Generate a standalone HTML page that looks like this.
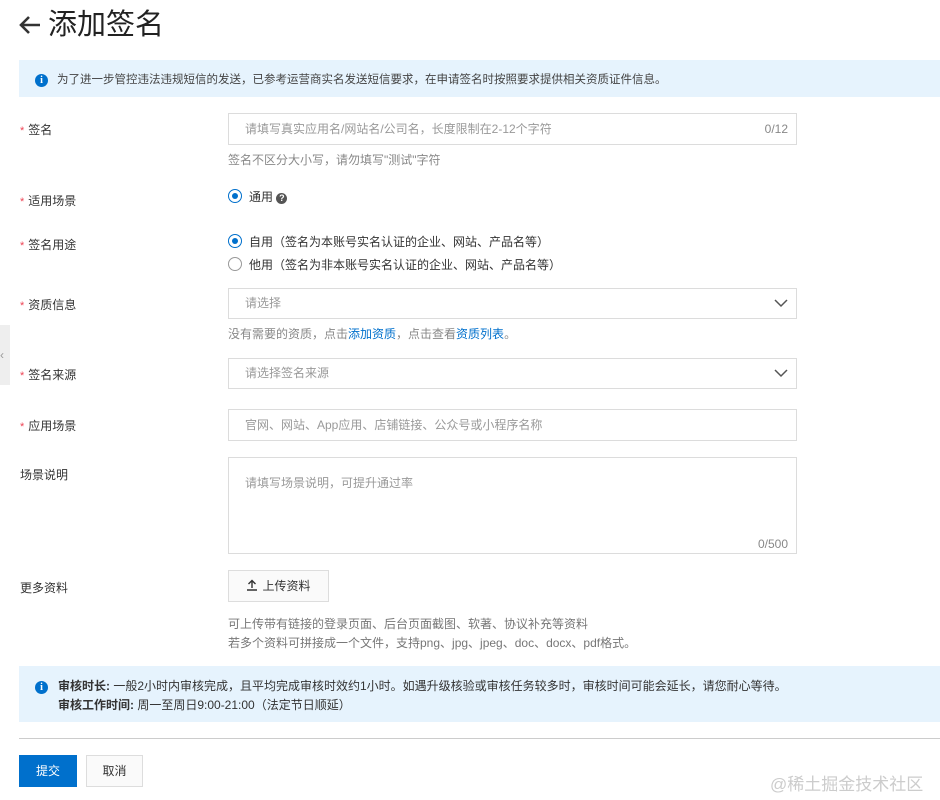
<!DOCTYPE html>
<html><head><meta charset="utf-8"><style>
*{box-sizing:border-box;margin:0;padding:0}
body{width:940px;height:800px;background:#fff;font-family:"Liberation Sans","Noto Sans CJK SC",sans-serif;font-size:12px;color:#333;position:relative;overflow:hidden}
.a{position:absolute}
.lbl{left:20px;font-size:12px;color:#333}
.lbl i{color:#e45;font-style:normal;margin-right:4px;font-size:11px}
.inp{left:228px;width:569px;border:1px solid #dcdcdc;background:#fff;color:#999;padding-left:16px;font-size:12px}
.hint{left:228px;color:#888;font-size:12px}
.radio{width:14px;height:14px;border-radius:50%;border:1px solid #999;display:inline-block;vertical-align:-2px;margin-right:7px;position:relative}
.radio.on{border-color:#0070cc;border-width:1.5px}
.radio.on:after{content:"";position:absolute;left:2.5px;top:2.5px;width:6px;height:6px;border-radius:50%;background:#0070cc}
.chev{position:absolute;right:8px;top:7px}
.info{left:19px;width:921px;background:#e6f3fd}
.ic{display:inline-block;width:13px;height:13px;border-radius:50%;background:#0070cc;color:#fff;font-size:10px;font-weight:bold;text-align:center;line-height:13px;font-family:"Liberation Serif",serif}
a{color:#0070cc;text-decoration:none}
</style></head><body>
<div class="a" style="left:18px;top:6px;font-size:29px;color:#222;line-height:38px">
<svg width="24" height="20" viewBox="0 0 24 20" style="vertical-align:-1px;margin-right:6px"><path d="M22 10H4M11 2L3 10l8 8" stroke="#333" stroke-width="2.6" fill="none"/></svg>添加签名</div>
<div class="a info" style="top:60px;height:37px;padding:11px 0 0 16px;color:#444;font-size:11.5px"><span class="ic" style="margin-right:9px">i</span>为了进一步管控违法违规短信的发送，已参考运营商实名发送短信要求，在申请签名时按照要求提供相关资质证件信息。</div>
<div class="a" style="left:0;top:325px;width:10px;height:60px;background:#eee;color:#999;font-size:12px;line-height:60px">‹</div>

<div class="a lbl" style="top:121px"><i>*</i>签名</div>
<div class="a inp" style="top:113px;height:32px;line-height:30px">请填写真实应用名/网站名/公司名，长度限制在2-12个字符<span style="position:absolute;right:8px;color:#888">0/12</span></div>
<div class="a hint" style="top:151px">签名不区分大小写，请勿填写"测试"字符</div>

<div class="a lbl" style="top:192px"><i>*</i>适用场景</div>
<div class="a" style="left:228px;top:188px;color:#333"><span class="radio on"></span>通用 <span style="display:inline-block;width:11px;height:11px;border-radius:50%;background:#555;color:#fff;font-size:9px;line-height:11px;text-align:center;font-weight:bold">?</span></div>

<div class="a lbl" style="top:236px"><i>*</i>签名用途</div>
<div class="a" style="left:228px;top:233px"><span class="radio on"></span>自用（签名为本账号实名认证的企业、网站、产品名等）</div>
<div class="a" style="left:228px;top:256px"><span class="radio"></span>他用（签名为非本账号实名认证的企业、网站、产品名等）</div>

<div class="a lbl" style="top:296px"><i>*</i>资质信息</div>
<div class="a inp" style="top:288px;height:31px;line-height:29px">请选择<svg class="chev" width="14" height="14"><path d="M1 4l6 6 6-6" stroke="#555" stroke-width="1.5" fill="none"/></svg></div>
<div class="a hint" style="top:325px">没有需要的资质，点击<a>添加资质</a>，点击查看<a>资质列表</a>。</div>

<div class="a lbl" style="top:366px"><i>*</i>签名来源</div>
<div class="a inp" style="top:358px;height:31px;line-height:29px">请选择签名来源<svg class="chev" width="14" height="14"><path d="M1 4l6 6 6-6" stroke="#555" stroke-width="1.5" fill="none"/></svg></div>

<div class="a lbl" style="top:417px"><i>*</i>应用场景</div>
<div class="a inp" style="top:409px;height:32px;line-height:30px">官网、网站、App应用、店铺链接、公众号或小程序名称</div>

<div class="a lbl" style="top:466px">场景说明</div>
<div class="a inp" style="top:457px;height:97px;padding-top:16px">请填写场景说明，可提升通过率<span style="position:absolute;right:8px;bottom:2px;color:#888">0/500</span></div>

<div class="a lbl" style="top:579px">更多资料</div>
<div class="a" style="left:228px;top:570px;width:101px;height:32px;border:1px solid #ddd;background:#fafafa;line-height:30px;text-align:center;color:#333">
<svg width="12" height="12" style="vertical-align:-1px;margin-right:4px"><path d="M6 9V1.5M2.5 5L6 1.5 9.5 5M1 11h10" stroke="#333" stroke-width="1.4" fill="none"/></svg>上传资料</div>
<div class="a hint" style="top:615px;line-height:19px;color:#777">可上传带有链接的登录页面、后台页面截图、软著、协议补充等资料<br>若多个资料可拼接成一个文件，支持png、jpg、jpeg、doc、docx、pdf格式。</div>

<div class="a info" style="top:666px;height:56px;padding:11px 0 0 16px;line-height:19px;color:#333"><span class="ic" style="margin-right:10px">i</span><b>审核时长:</b> 一般2小时内审核完成，且平均完成审核时效约1小时。如遇升级核验或审核任务较多时，审核时间可能会延长，请您耐心等待。<br><span style="margin-left:23px"><b>审核工作时间:</b> 周一至周日9:00-21:00（法定节日顺延）</span></div>
<div class="a" style="left:19px;top:738px;width:921px;height:1px;background:#ccc"></div>
<div class="a" style="left:19px;top:755px;width:58px;height:32px;background:#0070cc;color:#fff;text-align:center;line-height:32px">提交</div>
<div class="a" style="left:86px;top:755px;width:57px;height:32px;border:1px solid #ddd;background:#fafafa;text-align:center;line-height:30px">取消</div>
<div class="a" style="left:770px;top:770px;font-size:17px;color:#ccc">@稀土掘金技术社区</div>
</body></html>
